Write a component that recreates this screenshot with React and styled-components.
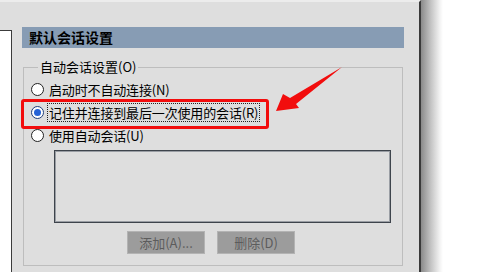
import React from "react";
import styled, { createGlobalStyle } from "styled-components";

const Global = createGlobalStyle`
  html, body { margin: 0; padding: 0; background: #ffffff; }
  body { font-family: "Noto Sans CJK SC", "Noto Sans", sans-serif; }
  * { box-sizing: border-box; }
`;

const Page = styled.div`
  position: relative;
  display: flex;
  width: 500px;
  height: 272px;
  overflow: hidden;
  background: #ffffff;
`;

const Window = styled.div`
  display: flex;
  width: 421px;
  height: 272px;
  background: #dedede;
  border-top: 2px solid #ececec;
  border-right: 2px solid #3a3a3a;
`;

const Shadow = styled.div`
  width: 22px;
  height: 272px;
  background: linear-gradient(to right, #8a8a8a, #c4c4c4 45%, #f2f2f2 85%, #ffffff);
`;

const LeftPane = styled.div`
  margin-top: 28px;
  width: 12px;
  background: #ffffff;
  border-top: 1px solid #3c3c3c;
  border-right: 1px solid #3c3c3c;
`;

const Content = styled.div`
  display: flex;
  flex-direction: column;
  padding: 25px 0 0 10px;
`;

const Header = styled.div`
  width: 382px;
  height: 21px;
  padding-left: 7px;
  background: #879cb4;
  color: #000;
  font-weight: 700;
  font-size: 14px;
  line-height: 21px;
`;

const Group = styled.fieldset`
  margin: 11px 0 0 1px;
  width: 380px;
  height: 207px;
  padding: 3px 0 0 7px;
  border: 1px solid #bdbdbd;
  display: flex;
  flex-direction: column;
`;

const Legend = styled.legend`
  margin-left: 7px;
  padding: 0 2px;
  font-size: 13px;
  line-height: 16px;
  color: #000;
`;

const Row = styled.label`
  display: flex;
  align-items: center;
  height: 23px;
  gap: 4px;
  font-size: 13px;
  color: #000;
`;

const Radio = styled.span`
  position: relative;
  width: 13px;
  height: 13px;
  border-radius: 50%;
  background: #ffffff;
  border: 1px solid ${(p) => (p.$checked ? "#1d3d7a" : "#222222")};
  flex: none;
  &::after {
    content: "";
    display: ${(p) => (p.$checked ? "block" : "none")};
    position: absolute;
    left: 2px;
    top: 2px;
    width: 7px;
    height: 7px;
    border-radius: 50%;
    background: #2563d6;
  }
`;

const RowText = styled.span`
  line-height: 17px;
  padding: 0 1px;
  letter-spacing: -0.15px;
  outline: ${(p) => (p.$focus ? "1px dotted #222" : "none")};
`;

const ListBox = styled.div`
  margin: 3px 0 0 23px;
  width: 337px;
  height: 73px;
  background: #dedede;
  border: 1px solid #3e444c;
  box-shadow: inset 0 0 0 1px #9a9ea4;
`;

const Buttons = styled.div`
  display: flex;
  gap: 12px;
  margin: 8px 0 0 96px;
`;

const Button = styled.button`
  width: 78px;
  height: 23px;
  padding: 0;
  background: #9c9c9c;
  border: 1px solid #b3b3b3;
  color: #5c5c5c;
  font-family: "Noto Sans CJK SC", "Noto Sans", sans-serif;
  font-size: 13px;
  line-height: 21px;
`;

const Highlight = styled.div`
  position: absolute;
  left: 21px;
  top: 99px;
  width: 248px;
  height: 30px;
  border: 3px solid #f20d0d;
  border-radius: 3px;
  pointer-events: none;
`;

const Arrow = styled.svg`
  position: absolute;
  left: 270px;
  top: 60px;
  width: 80px;
  height: 60px;
`;

export default function App() {
  return (
    <>
      <Global />
      <Page>
        <Window>
          <LeftPane />
          <Content>
            <Header>默认会话设置</Header>
            <Group>
              <Legend>自动会话设置(O)</Legend>
              <Row>
                <Radio />
                <RowText>启动时不自动连接(N)</RowText>
              </Row>
              <Row>
                <Radio $checked />
                <RowText $focus>记住并连接到最后一次使用的会话(R)</RowText>
              </Row>
              <Row>
                <Radio />
                <RowText>使用自动会话(U)</RowText>
              </Row>
              <ListBox />
              <Buttons>
                <Button disabled>添加(A)...</Button>
                <Button disabled>删除(D)</Button>
              </Buttons>
            </Group>
          </Content>
        </Window>
        <Shadow />
        <Highlight />
        <Arrow viewBox="270 60 80 60">
          <polygon
            points="276,111 283,94 290,98 342,67 296,104 299,108"
            fill="#f20d0d"
          />
        </Arrow>
      </Page>
    </>
  );
}
